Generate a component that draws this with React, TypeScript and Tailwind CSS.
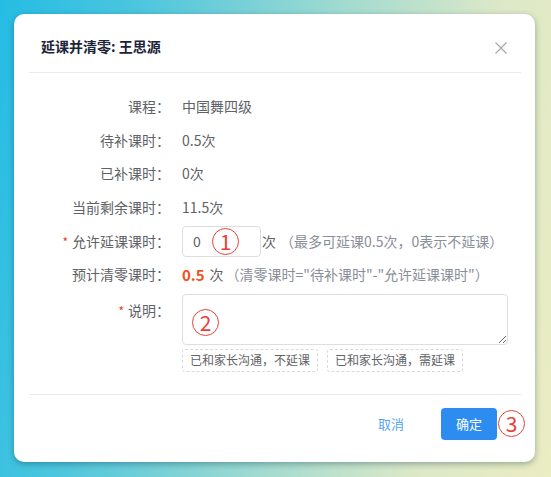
import React from "react";

const font = { fontFamily: '"Noto Sans CJK SC", "Noto Sans", sans-serif' };

function Mark({ n, className }: { n: string; className: string }) {
    return (
        <span
            className={
                "absolute flex h-[27px] w-[27px] items-center justify-center rounded-full border-[1.5px] border-[#e8403a] text-[21px] leading-none text-[#e8403a] " +
                className
            }
        >
            {n}
        </span>
    );
}

function Row({
    label,
    required,
    children,
}: {
    label: string;
    required?: boolean;
    children: React.ReactNode;
}) {
    return (
        <div className="flex h-[33.6px] items-center">
            <div className="w-[153px] pr-3 text-right text-[14px] text-[#606266]">
                {required && <span className="mr-1 text-[12px] text-[#ed4014]">*</span>}
                {label}：
            </div>
            <div className="flex items-center text-[14px] text-[#606266]">{children}</div>
        </div>
    );
}

export default function App() {
    return (
        <div
            style={font}
            className="min-h-[477px] w-full bg-[linear-gradient(100deg,#25bce4_0%,#4cc6de_22%,#a3dbd0_55%,#dbe8c8_78%,#ebedc2_100%)] pl-[14px] pt-[14px]"
        >
            <div className="flex w-[521px] flex-col rounded-[10px] bg-white shadow-[0_2px_6px_rgba(0,40,60,0.35)]">
                {/* header */}
                <div className="flex h-[58px] items-start justify-between pl-[27px] pr-[28px] pt-[22px]">
                    <h1 className="text-[14px] font-bold leading-5 text-[#1c2438]">延课并清零: 王思源</h1>
                    <svg className="mt-[6px]" width="12" height="12" viewBox="0 0 12 12">
                        <path d="M0.5 0.5 L11.5 11.5 M11.5 0.5 L0.5 11.5" stroke="#a3a6ab" strokeWidth="1.1" fill="none" />
                    </svg>
                </div>
                <div className="ml-[15px] mr-[14px] h-px bg-[#e8eaec]" />

                {/* body */}
                <div className="px-[15px] pt-[17px]">
                    <Row label="课程">中国舞四级</Row>
                    <Row label="待补课时">0.5次</Row>
                    <Row label="已补课时">0次</Row>
                    <Row label="当前剩余课时">11.5次</Row>
                    <Row label="允许延课课时" required>
                        <div className="relative">
                            <input
                                defaultValue="0"
                                className="h-[31px] w-[79px] rounded-[4px] border border-[#dcdee2] px-[10px] text-[14px] text-[#606266] outline-none"
                            />
                            <Mark n="1" className="left-[30px] top-[2px]" />
                        </div>
                        <span className="ml-[1px]">次</span>
                        <span className="ml-1 text-[14px] text-[#8a8e99]">（最多可延课0.5次，0表示不延课）</span>
                    </Row>
                    <Row label="预计清零课时">
                        <span className="text-[15px] font-bold text-[#f2521e]">0.5</span>
                        <span className="ml-[5px]">次</span>
                        <span className="ml-[2px] text-[14px] text-[#8a8e99]">（清零课时="待补课时"-"允许延课课时"）</span>
                    </Row>

                    <div className="mt-[2px] flex">
                        <div className="w-[153px] pr-3 pt-[6px] text-right text-[14px] leading-5 text-[#606266]">
                            <span className="mr-1 text-[12px] text-[#ed4014]">*</span>说明：
                        </div>
                        <div>
                            <div className="relative">
                                <textarea className="block h-[51px] w-[326px] rounded-[4px] border border-[#dcdee2] px-[7px] py-1 text-[14px] outline-none" />
                                <Mark n="2" className="left-[10px] top-[15px]" />
                            </div>
                            <div className="mt-[4px] flex gap-[9px]">
                                <span className="flex h-[23px] items-center rounded-[3px] border border-dashed border-[#d7dae0] px-[7px] text-[12px] text-[#606266]">
                                    已和家长沟通，不延课
                                </span>
                                <span className="flex h-[23px] items-center rounded-[3px] border border-dashed border-[#d7dae0] px-[7px] text-[12px] text-[#606266]">
                                    已和家长沟通，需延课
                                </span>
                            </div>
                        </div>
                    </div>
                </div>

                <div className="ml-[15px] mr-[14px] mt-[22px] h-px bg-[#e8eaec]" />

                {/* footer */}
                <div className="flex items-center justify-end pb-[22px] pr-[38px] pt-[13px]">
                    <button className="mr-[22px] h-[32px] w-[56px] text-[13px] text-[#5aa4f2]">取消</button>
                    <button className="relative h-[32px] w-[56px] rounded-[4px] bg-[#2d8cf0] text-[13px] text-white">
                        确定
                        <Mark n="3" className="left-full top-[2px] ml-[1px]" />
                    </button>
                </div>
            </div>
        </div>
    );
}
